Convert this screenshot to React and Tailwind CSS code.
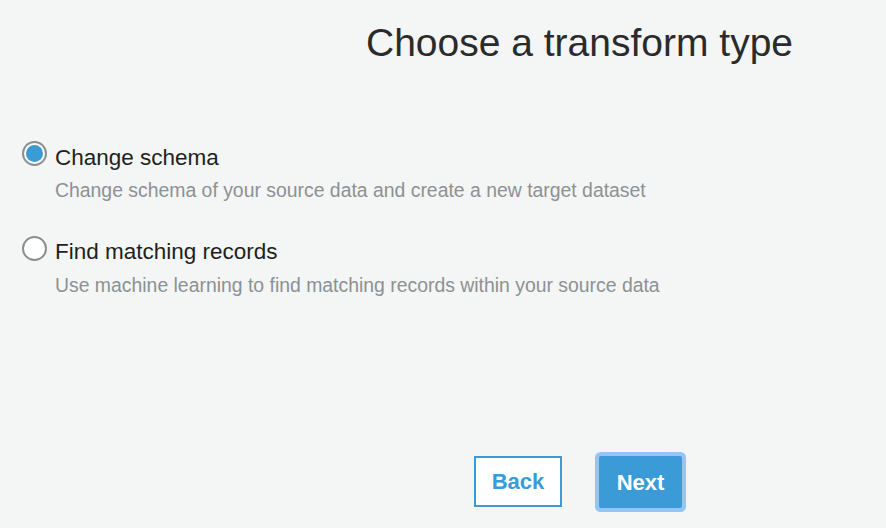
export default function App() {
  return (
    <div
      className="h-[528px] w-[886px] overflow-hidden bg-[#f4f5f5] text-[#222]"
      style={{ fontFamily: '"Liberation Sans", Arial, sans-serif' }}
    >
      <h1 className="pl-[366px] pt-[20px] text-[39px] leading-[46px] text-[#2b2b2b]">
        Choose a transform type
      </h1>

      <div className="mt-[79px] flex flex-col gap-[38px] pl-[22px]">
        <label className="flex gap-[8px]">
          <span className="mt-[-4px] flex h-[25px] w-[25px] shrink-0 items-center justify-center rounded-full border-2 border-[#8b8f92] bg-white">
            <span className="h-[17px] w-[17px] rounded-full bg-[#3a9bd7]" />
          </span>
          <span className="flex flex-col">
            <span className="text-[22.5px] leading-[26px] text-[#1f1f1f]">Change schema</span>
            <span className="mt-[8px] text-[19.4px] leading-[22px] text-[#8c9194]">
              Change schema of your source data and create a new target dataset
            </span>
          </span>
        </label>

        <label className="flex gap-[8px]">
          <span className="mt-[-3px] h-[25px] w-[25px] shrink-0 rounded-full border-2 border-[#8b8f92] bg-white" />
          <span className="flex flex-col">
            <span className="text-[22.5px] leading-[26px] text-[#1f1f1f]">Find matching records</span>
            <span className="mt-[9px] text-[19.4px] leading-[22px] text-[#8c9194]">
              Use machine learning to find matching records within your source data
            </span>
          </span>
        </label>
      </div>

      <div className="mt-[160px] flex items-start gap-[37px] pl-[474px]">
        <button className="h-[51px] w-[88px] border-2 border-[#3a9bd7] bg-white text-[22px] font-bold text-[#3a9bd7]">
          Back
        </button>
        <button className="h-[52px] w-[83px] rounded-[2px] bg-[#3a9bd7] text-[22px] font-bold text-white ring-4 ring-[#93c6f6]">
          Next
        </button>
      </div>
    </div>
  )
}
